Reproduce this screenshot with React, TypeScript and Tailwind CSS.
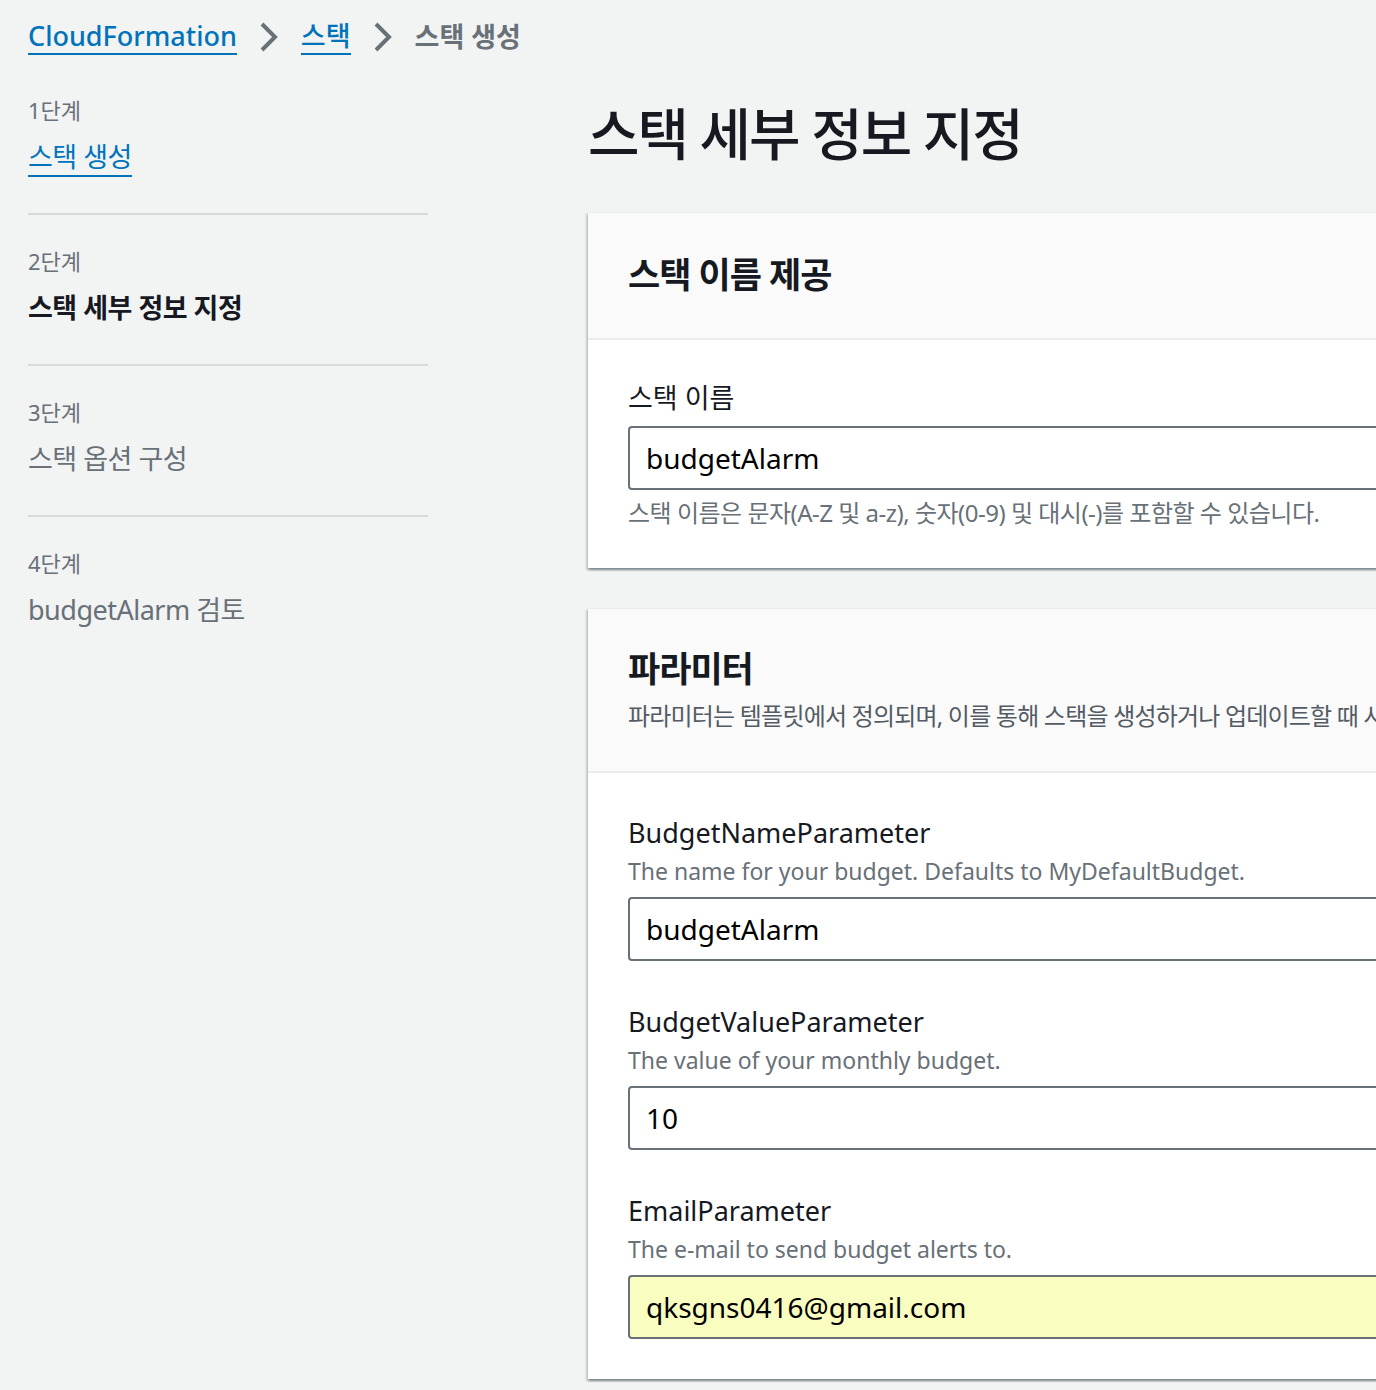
import React from "react";

const font = "font-['Noto_Sans','Noto_Sans_CJK_KR',sans-serif]";

function Chevron() {
  return (
    <svg width={22} height={30} viewBox="0 0 22 30" fill="none" className="mx-[21px]">
      <path d="M4 2l13 13L4 28" stroke="#687078" strokeWidth={4} />
    </svg>
  );
}

function Step({ num, children, last }: { num: string; children: React.ReactNode; last?: boolean }) {
  return (
    <div className={last ? "pt-[31px]" : "pt-[31px] pb-[36px] border-b-2 border-[#d5dbdb]"}>
      <div className="text-[22px] leading-[30px] text-[#687078]">{num}</div>
      <div className="mt-[12px] text-[27px] leading-[40px] tracking-[-0.5px]">{children}</div>
    </div>
  );
}

function Field({ label, desc, value, autofill }: { label: string; desc?: string; value: string; autofill?: boolean }) {
  return (
    <div>
      <div className="text-[27px] leading-[40px] text-[#16191f]">{label}</div>
      {desc && <div className="text-[23px] leading-[36px] text-[#687078]">{desc}</div>}
      <div
        className={`mt-[8px] h-[64px] flex items-center px-[16px] border-2 border-[#687078] rounded-[4px] text-[28px] ${
          autofill ? "bg-[#fafdc0]" : "bg-white"
        } text-black`}
      >
        {value}
      </div>
    </div>
  );
}

export default function App() {
  return (
    <div className={`min-h-[1390px] bg-[#f2f3f3] overflow-hidden ${font}`}>
      {/* breadcrumb */}
      <div className="flex items-center pl-[28px] pt-[16px] h-[58px] text-[27px] font-medium">
        <a className="text-[#0073bb] border-b-2 border-[#0073bb] leading-[34px]">CloudFormation</a>
        <Chevron />
        <a className="text-[#0073bb] border-b-2 border-[#0073bb] leading-[34px]">스택</a>
        <Chevron />
        <span className="text-[#687078] font-bold leading-[34px]">스택 생성</span>
      </div>

      <div className="flex pl-[28px]">
        {/* left nav */}
        <nav className="w-[400px] shrink-0 mt-[6px]">
          <Step num="1단계">
            <a className="text-[#0073bb] border-b-2 border-[#0073bb]">스택 생성</a>
          </Step>
          <Step num="2단계">
            <span className="font-bold text-[#16191f]">스택 세부 정보 지정</span>
          </Step>
          <Step num="3단계">
            <span className="text-[#687078]">스택 옵션 구성</span>
          </Step>
          <Step num="4단계" last>
            <span className="text-[#687078]">budgetAlarm 검토</span>
          </Step>
        </nav>

        {/* main */}
        <main className="ml-[160px] w-[1000px] shrink-0">
          <h1 className="mt-[40px] text-[56px] leading-[70px] font-medium text-[#16191f] tracking-[-2px]">
            스택 세부 정보 지정
          </h1>

          <section className="mt-[44px] bg-white shadow-[0_2px_2px_rgba(0,28,36,0.3),2px_2px_2px_rgba(0,28,36,0.15),-2px_2px_2px_rgba(0,28,36,0.15)] border-t border-[#eaeded]">
            <div className="h-[127px] bg-[#fafafa] border-b-2 border-[#eaeded] px-[40px] flex items-center">
              <h2 className="text-[35px] font-bold text-[#16191f] tracking-[-1px]">스택 이름 제공</h2>
            </div>
            <div className="px-[40px] pt-[38px] pb-[38px]">
              <Field label="스택 이름" value="budgetAlarm" />
              <div className="mt-[6px] text-[24px] leading-[34px] text-[#687078] tracking-[-0.5px]">
                스택 이름은 문자(A-Z 및 a-z), 숫자(0-9) 및 대시(-)를 포함할 수 있습니다.
              </div>
            </div>
          </section>

          <section className="mt-[40px] bg-white shadow-[0_2px_2px_rgba(0,28,36,0.3),2px_2px_2px_rgba(0,28,36,0.15),-2px_2px_2px_rgba(0,28,36,0.15)] border-t border-[#eaeded]">
            <div className="h-[164px] bg-[#fafafa] border-b-2 border-[#eaeded] px-[40px] pt-[36px]">
              <h2 className="text-[35px] leading-[48px] font-bold text-[#16191f] tracking-[-1px]">파라미터</h2>
              <p className="mt-[6px] text-[24px] leading-[34px] text-[#545b64] whitespace-nowrap tracking-[-0.8px]">
                파라미터는 템플릿에서 정의되며, 이를 통해 스택을 생성하거나 업데이트할 때 사용자 지정 값을 입력할 수 있습니다.
              </p>
            </div>
            <div className="px-[40px] pt-[40px] pb-[40px] flex flex-col gap-[41px]">
              <Field
                label="BudgetNameParameter"
                desc="The name for your budget. Defaults to MyDefaultBudget."
                value="budgetAlarm"
              />
              <Field label="BudgetValueParameter" desc="The value of your monthly budget." value="10" />
              <Field
                label="EmailParameter"
                desc="The e-mail to send budget alerts to."
                value="qksgns0416@gmail.com"
                autofill
              />
            </div>
          </section>
        </main>
      </div>
    </div>
  );
}
